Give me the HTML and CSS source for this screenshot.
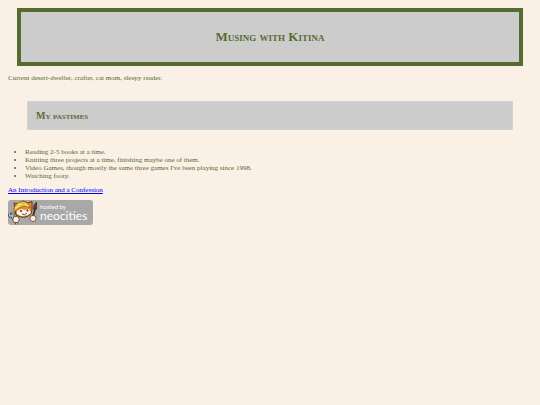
FILE: index.html
```html
<!DOCTYPE html>
<html lang="en">
<head>
    <meta charset="utf-8">
    <title>Musing with Kitina</title>
    <link rel="stylesheet" href="styles.css">
</head>

<body>

<h1>Musing with Kitina</h1>

<p>Current desert-dweller, crafter, cat mom, sleepy reader.</p>

<h2>My pastimes</h2>

<ul>
    <li>Reading 2-5 books at a time.</li>
    <li>Knitting three projects at a time, finishing maybe one of them.</li>
    <li>Video Games, though mostly the same three games I've been playing since 1998.</li>
    <li>Watching footy.</li>
</ul>

<p><a href="introduction.html">An Introduction and a Confession</a></p>

<a class="badge" href="https://neocities.org">
    <svg class="cat" viewBox="0 0 30 25" aria-hidden="true">
        <!-- fork and paw -->
        <path d="M3 15 L9 24 M1 13 L2 16 L5 16 L5 12" fill="none" stroke="#444" stroke-width="3"/>
        <path d="M3 15 L9 24 M1 13 L2 16 L5 16 L5 12" fill="none" stroke="#b8c4d0" stroke-width="1.300"/>
        <circle cx="8" cy="19.500" r="3.200" fill="#fff0dc" stroke="#554030" stroke-width=".8"/>
        <!-- brush and paw -->
        <path d="M24 20 L27 9" stroke="#4a2922" stroke-width="1.800"/>
        <path d="M25.500 9 L26 5 L28.500 2 L28.500 9 Z" fill="#8f3030" stroke="#4a2020" stroke-width=".8"/>
        <circle cx="25" cy="18.500" r="3.100" fill="#fff0dc" stroke="#554030" stroke-width=".8"/>
        <!-- head -->
        <path d="M7 10 L6 3 L10 4 L15 1 L20 3 L24 1.500 L24 10 L23 14 Q17 20 8 15 Z" fill="#e98b30" stroke="#553821"/>
        <path d="M9 11 L13 9 L17 10 L21 9 L23 13 Q16 19 9 14 Z" fill="#fff3e5"/>
        <path d="M6 8 Q9 1 16 1.500 Q22 3 22 8 L17 6 L11 8 L6 12 Z" fill="#edbd3c" stroke="#94651e" stroke-width=".8"/>
        <path d="M9 5 L14 4 M7 8 L12 6 M16 4 L20 6" stroke="#ffe580" fill="none"/>
        <circle cx="13" cy="11" r="1" fill="#412b24"/>
        <circle cx="19.500" cy="10.500" r="1" fill="#412b24"/>
        <path d="M14 14 Q17 16 19 13" fill="none" stroke="#79402e"/>
    </svg>
    <span class="host">
        <span class="small">hosted by</span>
        <span class="name">neocities</span>
    </span>
</a>

</body>
</html>
```
FILE: styles.css
```css
body {
    margin: 8px;
    background: linen;
    color: darkolivegreen;
    font: 7px/8px "Liberation Serif", "Times New Roman", serif;
}

h1, h2 {
    background: #ccc;
    font-variant: small-caps;
}

h1 {
    margin: 0 9px 8px;
    padding: 17px;
    border: 4px solid darkolivegreen;
    font-size: 13px;
    line-height: 16px;
    text-align: center;
}

h2 {
    margin: 19px 19px 18px;
    padding: 8px;
    border: 1px solid #d4d2cf;
    font-size: 10px;
    line-height: 11px;
}

p {
    margin: 6px 0;
}

ul {
    margin: 6px 0;
    padding-left: 17px;
}

.badge {
    display: flex;
    width: 85px;
    height: 25px;
    border-radius: 3px;
    background: #a8a8a8;
    color: #fff;
    font-family: Lato, "Open Sans", sans-serif;
    text-decoration: none;
}

.cat {
    width: 30px;
    height: 25px;
}

.host {
    display: flex;
    flex-direction: column;
    padding: 3px 0 0 2px;
}

.small {
    font-size: 6px;
    line-height: 7px;
}

.name {
    font-size: 12px;
    line-height: 12px;
}
```
